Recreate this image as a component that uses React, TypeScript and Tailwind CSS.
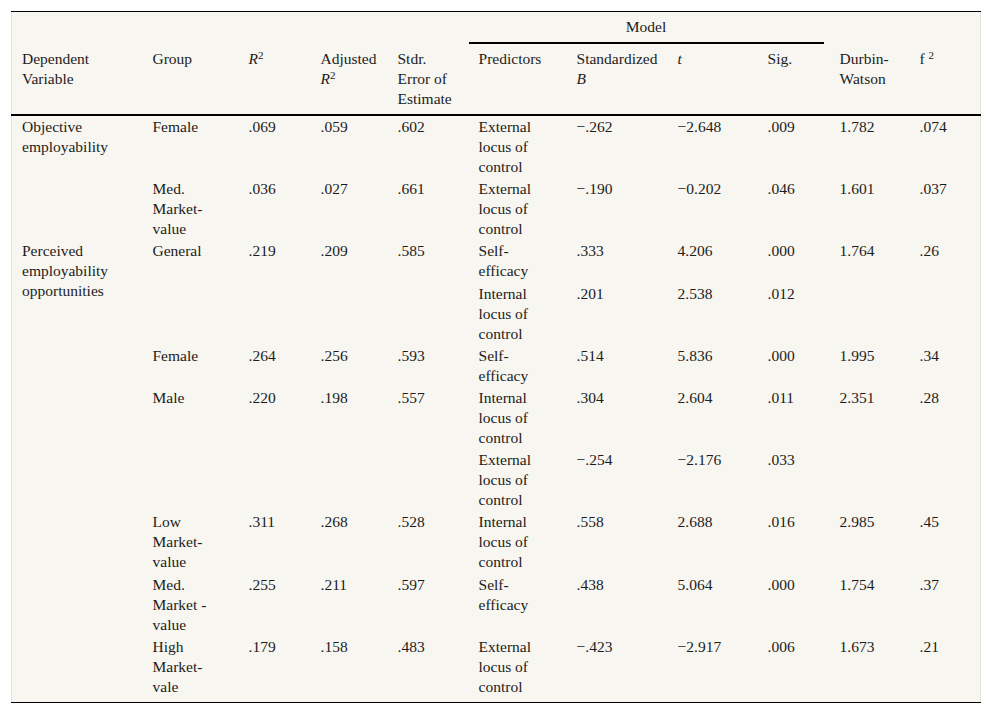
import React from "react";

type Row = {
  dep?: { text: React.ReactNode; span: number };
  group?: React.ReactNode;
  r2?: string;
  adj?: string;
  err?: string;
  pred: React.ReactNode;
  b: string;
  t: string;
  sig: string;
  dw?: string;
  f2?: string;
};

const ext = (
  <>
    External
    <br />
    locus of
    <br />
    control
  </>
);
const int = (
  <>
    Internal
    <br />
    locus of
    <br />
    control
  </>
);
const self = (
  <>
    Self-
    <br />
    efficacy
  </>
);

const rows: Row[] = [
  {
    dep: { text: <>Objective<br />employability</>, span: 2 },
    group: "Female",
    r2: ".069",
    adj: ".059",
    err: ".602",
    pred: ext,
    b: "−.262",
    t: "−2.648",
    sig: ".009",
    dw: "1.782",
    f2: ".074",
  },
  {
    group: <>Med.<br />Market-<br />value</>,
    r2: ".036",
    adj: ".027",
    err: ".661",
    pred: ext,
    b: "−.190",
    t: "−0.202",
    sig: ".046",
    dw: "1.601",
    f2: ".037",
  },
  {
    dep: { text: <>Perceived<br />employability<br />opportunities</>, span: 8 },
    group: "General",
    r2: ".219",
    adj: ".209",
    err: ".585",
    pred: self,
    b: ".333",
    t: "4.206",
    sig: ".000",
    dw: "1.764",
    f2: ".26",
  },
  { pred: int, b: ".201", t: "2.538", sig: ".012" },
  {
    group: "Female",
    r2: ".264",
    adj: ".256",
    err: ".593",
    pred: self,
    b: ".514",
    t: "5.836",
    sig: ".000",
    dw: "1.995",
    f2: ".34",
  },
  {
    group: "Male",
    r2: ".220",
    adj: ".198",
    err: ".557",
    pred: int,
    b: ".304",
    t: "2.604",
    sig: ".011",
    dw: "2.351",
    f2: ".28",
  },
  { pred: ext, b: "−.254", t: "−2.176", sig: ".033" },
  {
    group: <>Low<br />Market-<br />value</>,
    r2: ".311",
    adj: ".268",
    err: ".528",
    pred: int,
    b: ".558",
    t: "2.688",
    sig: ".016",
    dw: "2.985",
    f2: ".45",
  },
  {
    group: <>Med.<br />Market -<br />value</>,
    r2: ".255",
    adj: ".211",
    err: ".597",
    pred: self,
    b: ".438",
    t: "5.064",
    sig: ".000",
    dw: "1.754",
    f2: ".37",
  },
  {
    group: <>High<br />Market-<br />vale</>,
    r2: ".179",
    adj: ".158",
    err: ".483",
    pred: ext,
    b: "−.423",
    t: "−2.917",
    sig: ".006",
    dw: "1.673",
    f2: ".21",
  },
];

export default function App() {
  const th = "font-normal text-left align-top pl-[10px] pr-[4px] pt-[5px] pb-[5px]";
  return (
    <div className="min-h-screen bg-white pl-[11px] pt-[11px] font-['Liberation_Serif','Times_New_Roman',serif]">
      <table className="table-fixed border-collapse bg-[#f8f6f0] text-[15.5px] leading-[20px] text-[#1c1c1c] w-[969px] border-x border-[#e6e3dc]">
        <colgroup>
          <col className="w-[131px]" />
          <col className="w-[96px]" />
          <col className="w-[72px]" />
          <col className="w-[77px]" />
          <col className="w-[81px]" />
          <col className="w-[98px]" />
          <col className="w-[101px]" />
          <col className="w-[90px]" />
          <col className="w-[72px]" />
          <col className="w-[80px]" />
          <col className="w-[71px]" />
        </colgroup>
        <thead>
          <tr className="border-t border-black">
            <th className="p-0" colSpan={5}></th>
            <th className="p-0 font-normal" colSpan={4}>
              <div className="pt-[5px] pb-[5px] text-center pr-[6px]">Model</div>
              <div className="h-[2px] bg-black mr-[6px]" />
            </th>
            <th className="p-0" colSpan={2}></th>
          </tr>
          <tr className="border-b-2 border-black">
            <th className={th}>
              Dependent
              <br />
              Variable
            </th>
            <th className={th}>Group</th>
            <th className={th}>
              <i>R</i>
              <sup className="text-[11px]">2</sup>
            </th>
            <th className={th}>
              Adjusted
              <br />
              <i>R</i>
              <sup className="text-[11px]">2</sup>
            </th>
            <th className={th}>
              Stdr.
              <br />
              Error of
              <br />
              Estimate
            </th>
            <th className={th}>Predictors</th>
            <th className={th}>
              Standardized
              <br />
              <i>B</i>
            </th>
            <th className={th}>
              <i>t</i>
            </th>
            <th className={th}>Sig.</th>
            <th className={th}>
              Durbin-
              <br />
              Watson
            </th>
            <th className={th}>
              f <sup className="text-[11px]">2</sup>
            </th>
          </tr>
        </thead>
        <tbody className="border-b border-black">
          {rows.map((r, i) => {
            const last = i === rows.length - 1;
            const td = `align-top pl-[10px] pr-[4px] pt-[1px] ${last ? "pb-[5px]" : "pb-[1.2px]"}`;
            return (
              <tr key={i}>
                {r.dep && (
                  <td className={`${td} pb-[5px]`} rowSpan={r.dep.span}>
                    {r.dep.text}
                  </td>
                )}
                <td className={td}>{r.group}</td>
                <td className={td}>{r.r2}</td>
                <td className={td}>{r.adj}</td>
                <td className={td}>{r.err}</td>
                <td className={td}>{r.pred}</td>
                <td className={td}>{r.b}</td>
                <td className={td}>{r.t}</td>
                <td className={td}>{r.sig}</td>
                <td className={td}>{r.dw}</td>
                <td className={td}>{r.f2}</td>
              </tr>
            );
          })}
        </tbody>
      </table>
    </div>
  );
}
